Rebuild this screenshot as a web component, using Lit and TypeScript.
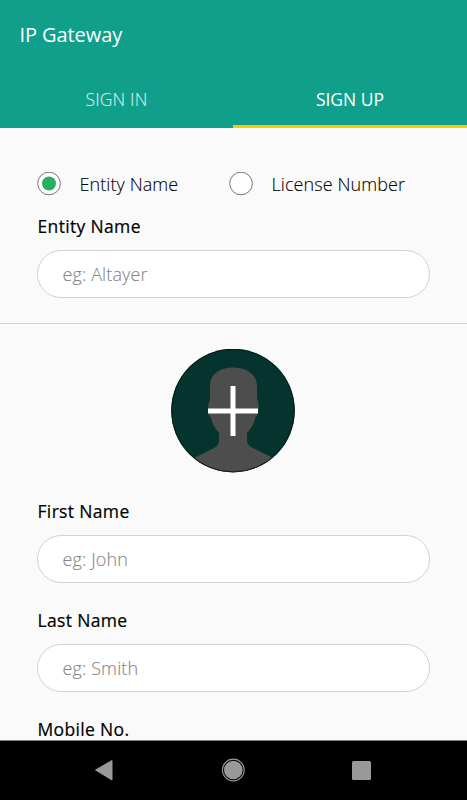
import { LitElement, html, css } from "lit";
import { customElement, property } from "lit/decorators.js";

@customElement("form-field")
class FormField extends LitElement {
  @property() label = "";
  @property() hint = "";
  static styles = css`
    :host { display: block; }
    .label { height: 24px; line-height: 24px; font-size: 17.5px; letter-spacing: .34px; -webkit-text-stroke: .2px #000; padding-left: .5px; color: #000; margin-bottom: 12px; white-space: nowrap; }
    .box { display: block; width: 100%; box-sizing: border-box; height: 48px; border: 1px solid #d2d2d2; border-radius: 24px; background: #fff; padding: 0 24.5px; font: 300 18px/46px "Open Sans", sans-serif; letter-spacing: .12px; color: #000; outline: none; }
    .box::placeholder { color: #858585; opacity: 1; -webkit-text-stroke: .1px #858585; }
  `;
  render() {
    return html`<div class="label">${this.label}</div><input class="box" placeholder=${this.hint} />`;
  }
}

@customElement("radio-option")
class RadioOption extends LitElement {
  @property() label = "";
  @property({ type: Boolean }) checked = false;
  static styles = css`
    :host { display: flex; align-items: center; gap: 18.5px; height: 24px; font-size: 18px; font-weight: 300; letter-spacing: .08px; color: #000; white-space: nowrap; }
    svg { display: block; flex: none; }
    .text { line-height: 24px; -webkit-text-stroke: .1px #000; }
  `;
  render() {
    return html`
      <svg width="24" height="24" viewBox="0 0 24 24">
        <circle cx="12" cy="11.500" r="11.300" fill="#fff" stroke="#777" stroke-width="1" />
        ${this.checked ? html`<svg width="24" height="24"><circle cx="12" cy="11.500" r="7" fill="#27ae60" /></svg>` : ""}
      </svg>
      <span class="text">${this.label}</span>`;
  }
}

@customElement("app-root")
class AppRoot extends LitElement {
  static styles = css`
    :host { display: flex; flex-direction: column; height: 800px; overflow: hidden; background: #fafafa; font-family: "Open Sans", sans-serif; }
    header { flex: none; height: 128px; background: #0f9f8b; color: #fff; display: flex; flex-direction: column; }
    .title { height: 70px; line-height: 70px; padding-left: 19.5px; font-size: 20px; letter-spacing: -.08px; }
    .tabs { flex: 1; display: grid; grid-template-columns: 233px 234px; }
    .tab { box-sizing: border-box; text-align: center; line-height: 58px; height: 58px; font-size: 17.5px; font-weight: 300; letter-spacing: .16px; -webkit-text-stroke: .15px currentColor; border-bottom: 3px solid transparent; color: rgba(255, 255, 255, 0.8); }
    .active { color: #fff; font-weight: 400; letter-spacing: 0; -webkit-text-stroke: 0; border-bottom-color: #fec803; }
    main { flex: 1; min-height: 0; overflow: hidden; }
    .entity { height: 196px; box-sizing: border-box; padding: 44px 37px 0; border-bottom: 1px solid #d2d2d2; }
    .radios { display: grid; grid-template-columns: 192px auto; margin-bottom: 18px; }
    .person { display: flex; flex-direction: column; padding: 25px 37px 0; }
    .avatar { align-self: center; display: block; margin: 0 1px 26px 0; }
    .person form-field { margin-bottom: 25px; }
    nav { flex: none; height: 60px; background: #000; }
    nav svg { display: block; }
  `;
  render() {
    return html`
      <header>
        <div class="title">IP Gateway</div>
        <div class="tabs"><div class="tab">SIGN IN</div><div class="tab active">SIGN UP</div></div>
      </header>
      <main>
        <section class="entity">
          <div class="radios">
            <radio-option label="Entity Name" checked></radio-option>
            <radio-option label="License Number"></radio-option>
          </div>
          <form-field label="Entity Name" hint="eg: Altayer"></form-field>
        </section>
        <section class="person">
          <svg class="avatar" width="124" height="124" viewBox="0 0 124 124">
            <defs><clipPath id="disc"><circle cx="62" cy="61.500" r="61.800" /></clipPath></defs>
            <g clip-path="url(#disc)">
              <rect width="124" height="124" fill="#05332d" />
              <path fill="#4c4d4c" d="M39 51V37C39 25 49 18.500 62 18.500S86 25 86 37V50C88.500 53 87.500 63 86.500 66L84.500 68C83 75 80 80 76 84V92C76 95 78 97 81 98.500L102 109L110 124H14L23 109L43 99C46 97 48 95 48 92V84C44 79 41 75 40 69L38 66C37 62 36.500 54 39 51Z" />
            </g>
            <circle cx="62" cy="61.500" r="61.400" fill="none" stroke="#03110f" stroke-width=".8" />
            <path stroke="#fff" stroke-width="5" d="M37 62H87M62 37V87" />
          </svg>
          <form-field label="First Name" hint="eg: John"></form-field>
          <form-field label="Last Name" hint="eg: Smith"></form-field>
          <form-field label="Mobile No."></form-field>
        </section>
      </main>
      <nav>
        <svg width="467" height="60" viewBox="0 0 467 60">
          <path d="M0 .5H467" stroke="#8d8f8e" stroke-width=".9" />
          <g fill="#999">
            <path d="M95.500 30L112 20.500V40Z" stroke="#999" stroke-width="1" stroke-linejoin="round" />
            <circle cx="233.300" cy="30" r="9.300" />
            <circle cx="233.300" cy="30" r="10.900" fill="none" stroke="#999" stroke-width="1.100" />
            <rect x="352" y="21" width="19" height="19" rx="1.500" />
          </g>
        </svg>
      </nav>`;
  }
}
